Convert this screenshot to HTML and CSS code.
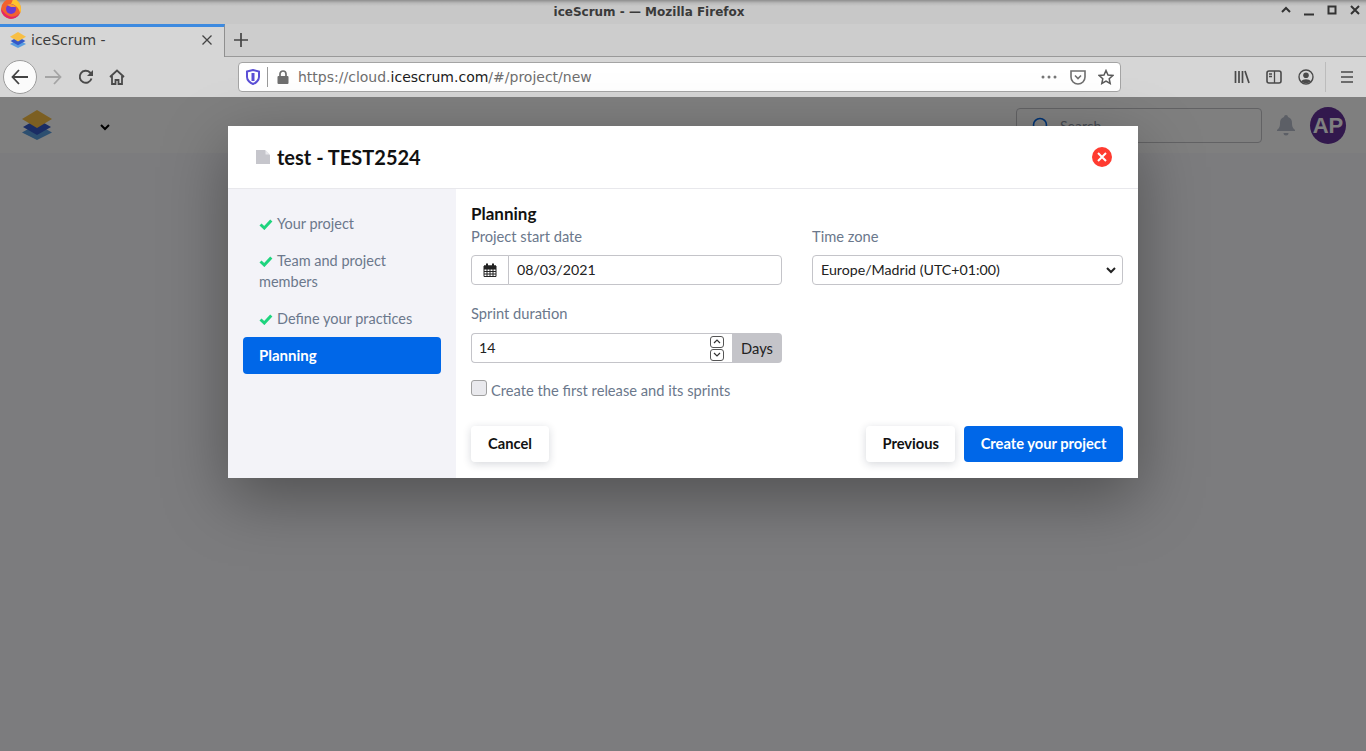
FILE: index.html
```html
<!DOCTYPE html>
<html lang="en">
<head>
  <meta charset="UTF-8" />
  <title>iceScrum - Mozilla Firefox</title>
  <link rel="stylesheet" href="styles.css">
</head>
<body>
  <svg class="defs" width="0" height="0">
    <symbol id="logo" viewBox="0 0 30 30">
      <path d="M15 14l15 8.500-15 7.500-15-7.500z" fill="#5a9ee0"/>
      <path d="M15 9l14 8-14 8-14-8z" fill="#3458c8"/>
      <path d="M15 0l15 9-15 9-15-9z" fill="#f8bf45"/>
    </symbol>
  </svg>

  <div class="titlebar">
    <svg class="ff-logo" width="22" height="22" viewBox="0 0 22 22">
      <circle cx="11" cy="10" r="10" fill="#f2622e"/>
      <path d="M1 10a10 10 0 0 0 19 4c-3 4-9 5-13 2-3-2-4-4-6-6z" fill="#e3246b"/>
      <path d="M13-1c5 2 8 6 8 11 0 1 0 2-1 4-1-5-4-8-9-9 1-2 2-4 2-6z" fill="#ffc22e"/>
      <circle cx="11" cy="10" r="5" fill="#6a3bd2"/>
      <path d="M7 6c3-2 7-1 9 2l-5 0z" fill="#ff9a2e"/>
    </svg>
    <span class="window-title">iceScrum - — Mozilla Firefox</span>
    <div class="window-buttons">
      <svg width="12" height="12" viewBox="0 0 12 12"><path d="M2 8l4-4 4 4" fill="none" stroke="#333" stroke-width="2"/></svg>
      <svg width="12" height="12" viewBox="0 0 12 12"><path d="M1 10.500h10" stroke="#333" stroke-width="2"/></svg>
      <svg width="12" height="12" viewBox="0 0 12 12"><rect x="2.500" y="2.500" width="7" height="7" fill="none" stroke="#333" stroke-width="2"/></svg>
      <svg width="12" height="12" viewBox="0 0 12 12"><path d="M2 2l8 8M10 2l-8 8" stroke="#333" stroke-width="2"/></svg>
    </div>
  </div>

  <div class="tabbar">
    <div class="tab">
      <svg class="tab-icon" width="16" height="16"><use href="#logo"/></svg>
      <span class="tab-title">iceScrum -</span>
      <svg class="tab-close" width="12" height="12" viewBox="0 0 12 12"><path d="M1.500 1.500l9 9M10.500 1.500l-9 9" stroke="#444" stroke-width="1.300"/></svg>
    </div>
    <svg class="new-tab" width="16" height="16" viewBox="0 0 16 16"><path d="M8 1v14M1 8h14" stroke="#444" stroke-width="1.700"/></svg>
  </div>

  <div class="toolbar">
    <div class="back-btn">
      <svg width="18" height="16" viewBox="0 0 18 16"><path d="M8 1L1.500 8 8 15M2 8h15" fill="none" stroke="#444" stroke-width="1.800"/></svg>
    </div>
    <svg class="tool-icon forward" width="18" height="16" viewBox="0 0 18 16"><path d="M10 1l6.500 7-6.500 7M16 8H1" fill="none" stroke="#a4a4a4" stroke-width="1.800"/></svg>
    <svg class="tool-icon reload" width="16" height="16" viewBox="0 0 16 16"><path d="M13.500 9.500A6 6 0 1 1 12 3.500l2 2" fill="none" stroke="#4a4a4a" stroke-width="1.900"/><path d="M15 1v6H9z" fill="#4a4a4a"/></svg>
    <svg class="tool-icon home" width="16" height="16" viewBox="0 0 16 16"><path d="M1 8l7-6.500L15 8M3 7v8h3.500v-4h3v4H13V7" fill="none" stroke="#4a4a4a" stroke-width="1.800"/></svg>

    <div class="urlbar">
      <svg class="shield" width="14" height="16" viewBox="0 0 14 16"><path d="M1 2.500L7 1l6 1.500V8c0 3-3 6-6 7-3-1-6-4-6-7z" fill="#fff" stroke="#5b4fd6" stroke-width="2"/><path d="M7 4v8" stroke="#5b4fd6" stroke-width="3"/></svg>
      <span class="url-sep"></span>
      <svg class="lock" width="14" height="14" viewBox="0 0 14 14"><path d="M4 6V4a3 3 0 0 1 6 0v2" fill="none" stroke="#6f6f6f" stroke-width="1.700"/><rect x="1.500" y="6" width="11" height="8" rx="1" fill="#6f6f6f"/></svg>
      <span class="url-text">https://cloud.<b>icescrum.com</b>/#/project/new</span>
      <svg class="url-dots" width="16" height="4" viewBox="0 0 16 4"><circle cx="2" cy="2" r="1.500"/><circle cx="8" cy="2" r="1.500"/><circle cx="14" cy="2" r="1.500"/></svg>
      <svg class="pocket" width="16" height="15" viewBox="0 0 16 15"><path d="M1 1h14v6a7 7 0 0 1-14 0z" fill="none" stroke="#6f6f6f" stroke-width="1.600"/><path d="M5 5.500l3 3 3-3" fill="none" stroke="#6f6f6f" stroke-width="1.600"/></svg>
      <svg class="star" width="16" height="16" viewBox="0 0 16 16"><path d="M8 1.500l2 4.500 4.800.5-3.600 3.200 1 4.800L8 12.100l-4.200 2.400 1-4.800L1.200 6.500 6 6z" fill="none" stroke="#5a5a5a" stroke-width="1.500"/></svg>
    </div>

    <svg class="tool-icon library" width="16" height="14" viewBox="0 0 16 14"><path d="M1.500 1v12M5 1v12M8.500 1v12M11 1l4 12" fill="none" stroke="#4a4a4a" stroke-width="1.700"/></svg>
    <svg class="tool-icon side" width="16" height="14" viewBox="0 0 16 14"><rect x="1" y="1" width="14" height="12" rx="2" fill="none" stroke="#4a4a4a" stroke-width="1.600"/><path d="M8.500 1v12M3 4h3M3 6.500h3" stroke="#4a4a4a" stroke-width="1.300"/></svg>
    <svg class="tool-icon account" width="16" height="16" viewBox="0 0 16 16"><circle cx="8" cy="8" r="7" fill="none" stroke="#4a4a4a" stroke-width="1.400"/><circle cx="8" cy="6.200" r="2.800" fill="#4a4a4a"/><path d="M3 12.500c2-3 8-3 10 0-2 2-8 2-10 0z" fill="#4a4a4a"/></svg>
    <span class="tool-sep"></span>
    <svg class="tool-icon menu" width="14" height="12" viewBox="0 0 14 12"><path d="M1 1h12M1 6h12M1 11h12" stroke="#4a4a4a" stroke-width="1.500"/></svg>
  </div>

  <div class="page">
    <div class="navbar">
      <svg class="nav-logo" width="30" height="30"><use href="#logo"/></svg>
      <svg class="nav-caret" width="10" height="8" viewBox="0 0 10 8"><path d="M1 2l4 4 4-4" fill="none" stroke="#000" stroke-width="2"/></svg>
      <div class="search">
        <svg width="18" height="18" viewBox="0 0 18 18"><circle cx="8" cy="8" r="6.500" fill="none" stroke="#0067e8" stroke-width="1.600"/><path d="M13 13l4 4" stroke="#0067e8" stroke-width="1.600"/></svg>
        <span>Search</span>
      </div>
      <svg class="bell" width="20" height="22" viewBox="0 0 20 22"><path d="M10 1a2 2 0 0 1 2 2c3 1 4 3 4 6 0 4 1 5 3 7v1H1v-1c2-2 3-3 3-7 0-3 1-5 4-6a2 2 0 0 1 2-2z" fill="#b9bfcc"/><path d="M7.500 19h5a2.500 2.500 0 0 1-5 0z" fill="#b9bfcc"/></svg>
      <div class="avatar">AP</div>
    </div>

    <div class="overlay">
      <div class="modal">
        <div class="modal-header">
          <svg class="file-icon" width="14" height="14" viewBox="0 0 14 14"><path d="M0 0h9l5 5v9H0z" fill="#c6c6cc"/><path d="M9.500 0L14 4.500H9.500z" fill="#e8e8ec"/></svg>
          <h4>test - TEST2524</h4>
          <svg class="close" width="20" height="20" viewBox="0 0 20 20"><circle cx="10" cy="10" r="10" fill="#ff3b30"/><path d="M6 6l8 8M14 6l-8 8" stroke="#fff" stroke-width="2"/></svg>
        </div>
        <div class="modal-body">
          <ul class="steps">
            <li><svg class="check" width="14" height="11" viewBox="0 0 14 11"><path d="M1.500 5.500l3.800 3.500 7-7.500" fill="none" stroke="#1ed47e" stroke-width="3"/></svg>Your project</li>
            <li><svg class="check" width="14" height="11" viewBox="0 0 14 11"><path d="M1.500 5.500l3.800 3.500 7-7.500" fill="none" stroke="#1ed47e" stroke-width="3"/></svg>Team and project members</li>
            <li><svg class="check" width="14" height="11" viewBox="0 0 14 11"><path d="M1.500 5.500l3.800 3.500 7-7.500" fill="none" stroke="#1ed47e" stroke-width="3"/></svg>Define your practices</li>
            <li class="active">Planning</li>
          </ul>
          <div class="panel">
            <h5>Planning</h5>
            <div class="form-row">
              <div class="field">
                <label>Project start date</label>
                <div class="input-group">
                  <span class="addon-cal">
                    <svg width="14" height="14" viewBox="0 0 14 14"><path d="M1 3h12v10.500H1zM1 6h12M4 6v7.500M7 6v7.500M10 6v7.500M1 8.500h12M1 11h12" fill="none" stroke="#222" stroke-width="1"/><path d="M1 2.500h12V6H1z" fill="#222"/><path d="M4 .5v3M10 .5v3" stroke="#222" stroke-width="2"/></svg>
                  </span>
                  <input class="control date" type="text" value="08/03/2021">
                </div>
              </div>
              <div class="field">
                <label>Time zone</label>
                <div class="select-wrap">
                  <select class="control">
                    <option>Europe/Madrid (UTC+01:00)</option>
                  </select>
                  <svg class="select-caret" width="10" height="8" viewBox="0 0 10 8"><path d="M1 2l4 4 4-4" fill="none" stroke="#222" stroke-width="2"/></svg>
                </div>
              </div>
            </div>
            <div class="form-row sprint-row">
              <div class="field">
                <label>Sprint duration</label>
                <div class="input-group">
                  <div class="number-box">
                    <input class="number" type="text" value="14">
                    <div class="stepper">
                      <span><svg width="8" height="5" viewBox="0 0 8 5"><path d="M1 4l3-3 3 3" fill="none" stroke="#333" stroke-width="1.200"/></svg></span>
                      <span><svg width="8" height="5" viewBox="0 0 8 5"><path d="M1 1l3 3 3-3" fill="none" stroke="#333" stroke-width="1.200"/></svg></span>
                    </div>
                  </div>
                  <span class="addon-days">Days</span>
                </div>
              </div>
            </div>
            <div class="check-row">
              <span class="checkbox"></span>
              <span>Create the first release and its sprints</span>
            </div>
            <div class="footer">
              <button class="btn cancel">Cancel</button>
              <div class="footer-right">
                <button class="btn">Previous</button>
                <button class="btn primary">Create your project</button>
              </div>
            </div>
          </div>
        </div>
      </div>
    </div>
  </div>
</body>
</html>
```

FILE: styles.css
```css
:root {
  --blue: #0067e8;
  --muted: #6b788c;
  --line: #c4c4c9;
}

* {
  box-sizing: border-box;
}

html, body {
  height: 100%;
}

body {
  margin: 0;
  display: flex;
  flex-direction: column;
  overflow: hidden;
  font-family: "DejaVu Sans", sans-serif;
}

.defs {
  position: absolute;
}

/* window title */
.titlebar {
  height: 24px;
  display: flex;
  align-items: center;
  justify-content: center;
  padding-right: 68px;
  background: linear-gradient(#8e8e8e 0, #b8b8b8 3px, #c8c8c8 6px);
  overflow: hidden;
  position: relative;
}

.ff-logo {
  position: absolute;
  left: 0;
  top: -1px;
}

.window-title {
  font-size: 12px;
  font-weight: bold;
  color: #3a3a3a;
}

.window-buttons {
  position: absolute;
  right: 5px;
  top: 4px;
  display: flex;
  gap: 11px;
}

/* tabs */
.tabbar {
  height: 33px;
  display: flex;
  align-items: stretch;
  background: #cdcdcd;
  border-bottom: 1px solid #999;
}

.tab {
  width: 225px;
  margin-bottom: -1px;
  display: flex;
  align-items: center;
  background: #d6d6d6;
  border-top: 3px solid #3d8ae0;
  border-right: 1px solid #8f8f8f;
  padding: 0 11px 4px 10px;
}

.tab-icon {
  margin-right: 5px;
}

.tab-title {
  flex: 1;
  font-size: 14px;
  color: #3c3c3c;
}

.new-tab {
  align-self: center;
  margin: -1px 8px 0;
}

/* navigation row */
.toolbar {
  height: 40px;
  display: flex;
  align-items: center;
  background: #d6d6d6;
  padding-left: 3px;
}

.back-btn {
  width: 34px;
  height: 34px;
  border-radius: 50%;
  background: #fbfbfb;
  border: 1px solid #9c9c9c;
  display: flex;
  align-items: center;
  justify-content: center;
}

.forward {
  margin-left: 7px;
}

.reload {
  margin-left: 16px;
}

.home {
  margin-left: 15px;
}

.urlbar {
  width: 883px;
  height: 30px;
  margin-left: 113px;
  display: flex;
  align-items: center;
  background: #fff;
  border: 1px solid #a4a4a4;
  border-radius: 4px;
  padding: 0 6px 0 7px;
}

.url-sep {
  width: 1px;
  height: 20px;
  background: #9a9a9a;
  margin: 0 8px 0 7px;
}

.url-text {
  flex: 1;
  margin-left: 8px;
  font-size: 14px;
  color: #6f6f6f;
}

.url-text b {
  font-weight: normal;
  color: #1c1c1c;
}

.url-dots {
  fill: #777;
}

.pocket {
  margin-left: 13px;
}

.star {
  margin-left: 12px;
}

.library {
  margin-left: 113px;
}

.side {
  margin-left: 16px;
}

.account {
  margin-left: 16px;
}

.tool-sep {
  width: 1px;
  height: 30px;
  background: #bcbcbc;
  margin: 0 14px 0 11px;
}

/* the app behind the dialog */
.page {
  flex: 1;
  position: relative;
  background: #f8f8fc;
}

.navbar {
  height: 56px;
  display: flex;
  align-items: center;
  background: #fff;
  padding: 0 20px 0 22px;
}

.nav-logo {
  margin-top: -1px;
}

.nav-caret {
  margin-left: 48px;
  margin-top: 3px;
}

.search {
  width: 246px;
  height: 35px;
  margin-left: 906px;
  margin-top: 1px;
  display: flex;
  align-items: center;
  gap: 10px;
  padding-left: 15px;
  border: 1px solid #c4c4c9;
  border-radius: 4px;
  font-family: "Lato", sans-serif;
  font-size: 14px;
  color: #8a93a3;
}

.bell {
  margin-left: 14px;
  margin-top: 0;
}

.avatar {
  width: 36px;
  height: 37px;
  margin-left: 14px;
  margin-top: 1px;
  border-radius: 50%;
  background: #64309a;
  color: #fff;
  font-family: "Liberation Sans", sans-serif;
  font-size: 22px;
  font-weight: bold;
  display: flex;
  align-items: center;
  justify-content: center;
}

.overlay {
  position: absolute;
  inset: 0;
  background: rgba(0, 0, 0, 0.5);
  display: flex;
  justify-content: center;
  align-items: flex-start;
  padding-top: 29px;
}

/* dialog */
.modal {
  width: 910px;
  background: #fff;
  box-shadow: 0 20px 60px rgba(0, 0, 0, 0.35);
  font-family: "Lato", sans-serif;
  font-size: 14.7px;
}

.modal-header {
  height: 63px;
  display: flex;
  align-items: center;
  padding: 0 26px 0 28px;
  border-bottom: 1px solid #e8e8ec;
}

.file-icon {
  margin-right: 7px;
}

.modal-header h4 {
  flex: 1;
  margin: 0 0 1px;
  font-size: 20px;
  font-weight: bold;
  color: #111;
}

.modal-body {
  display: flex;
  height: 289px;
}

.steps {
  width: 228px;
  margin: 0;
  padding: 16px 15px 0;
  list-style: none;
  background: #f3f3f8;
  color: var(--muted);
  font-size: 14.5px;
  line-height: 21px;
}

.steps li {
  padding: 8px 16px;
  border-radius: 4px;
}

.steps .active {
  background: var(--blue);
  color: #fff;
  font-size: 15px;
  font-weight: bold;
}

.check {
  margin-right: 4px;
  vertical-align: -1px;
}

.panel {
  flex: 1;
  padding: 14px 15px 16px;
  display: flex;
  flex-direction: column;
}

.panel h5 {
  margin: 0;
  font-size: 17px;
  line-height: 21px;
  font-weight: bold;
  color: #111;
}

.form-row {
  display: grid;
  grid-template-columns: 311px 311px;
  gap: 30px;
}

.sprint-row {
  margin-top: 18px;
}

.field label {
  display: block;
  height: 21px;
  margin: 2px 0 8px;
  line-height: 21px;
  color: var(--muted);
}

.sprint-row .field label {
  margin: 0 0 9px;
}

.input-group {
  display: flex;
  height: 30px;
}

.addon-cal {
  width: 38px;
  display: flex;
  align-items: center;
  justify-content: center;
  border: 1px solid var(--line);
  border-radius: 4px 0 0 4px;
  margin-right: -1px;
}

.control {
  width: 100%;
  height: 30px;
  padding: 0 8px 1px;
  border: 1px solid var(--line);
  border-radius: 4px;
  background: #fff;
  font-family: inherit;
  font-size: 14.2px;
  color: #222;
  appearance: none;
}

.date {
  flex: 1;
  width: auto;
  min-width: 0;
  border-radius: 0 4px 4px 0;
}

.select-wrap {
  position: relative;
}

.select-caret {
  position: absolute;
  right: 7px;
  top: 11px;
}

.number-box {
  flex: 1;
  display: flex;
  align-items: center;
  border: 1px solid var(--line);
  border-right: none;
  border-radius: 4px 0 0 4px;
  padding-right: 8px;
}

.number {
  flex: 1;
  min-width: 0;
  border: none;
  outline: none;
  padding: 0 7px 1px;
  font-family: inherit;
  font-size: 14.2px;
  color: #222;
}

.stepper {
  display: flex;
  flex-direction: column;
  gap: 1px;
}

.stepper span {
  width: 14px;
  height: 12px;
  border: 1px solid #555;
  border-radius: 3px;
  display: flex;
  align-items: center;
  justify-content: center;
}

.addon-days {
  width: 50px;
  padding-bottom: 1px;
  display: flex;
  align-items: center;
  justify-content: center;
  background: var(--line);
  border-radius: 0 4px 4px 0;
  color: #222;
}

.check-row {
  display: flex;
  align-items: flex-start;
  gap: 4px;
  margin-top: 17px;
  line-height: 21px;
  color: var(--muted);
}

.checkbox {
  width: 16px;
  height: 16px;
  border: 1px solid #a0a0a0;
  border-radius: 3px;
  background: #e9e9ed;
}

.footer {
  margin-top: auto;
  display: flex;
  justify-content: space-between;
}

.footer-right {
  display: flex;
  gap: 9px;
}

.btn {
  height: 36px;
  padding: 0 16px 2px;
  border: none;
  border-radius: 4px;
  background: #fff;
  box-shadow: 0 2px 8px rgba(30, 40, 60, 0.18);
  font-family: inherit;
  font-size: 14.7px;
  font-weight: bold;
  color: #111;
}

.cancel {
  min-width: 78px;
}

.primary {
  min-width: 159px;
  background: var(--blue);
  color: #fff;
  box-shadow: none;
}
```
